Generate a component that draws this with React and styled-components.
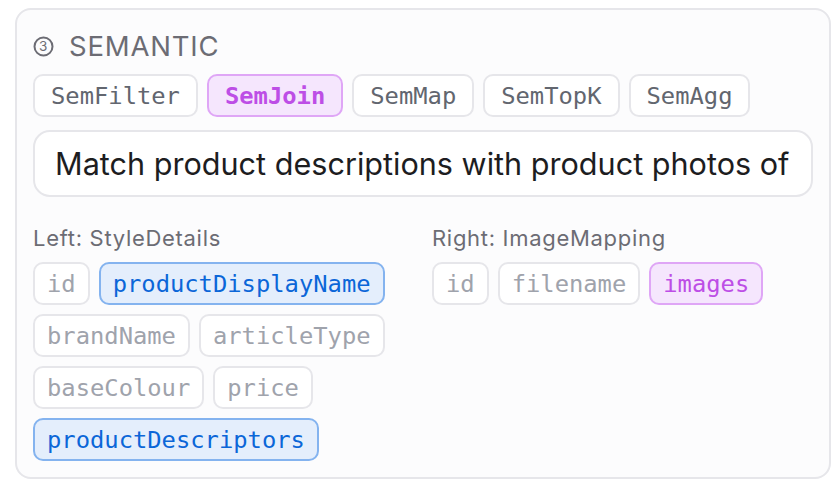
import React from 'react';
import styled, { createGlobalStyle } from 'styled-components';

const GlobalStyle = createGlobalStyle`
  html, body {
    margin: 0;
    padding: 0;
    background: #ffffff;
  }
  body {
    font-family: Inter, "Liberation Sans", sans-serif;
    -webkit-font-smoothing: antialiased;
  }
`;

const Page = styled.div`
  padding: 8px 7px 13px 15px;
  width: 838px;
  box-sizing: border-box;
`;

const Card = styled.section`
  border: 2px solid #e6e6ea;
  border-radius: 16px;
  background: #fcfcfd;
  padding: 20px 16px 16px 16px;
  display: flex;
  flex-direction: column;
`;

const Title = styled.h2`
  margin: 0;
  display: flex;
  align-items: center;
  gap: 15px;
  height: 32px;
  font-size: 27.5px;
  font-weight: 400;
  letter-spacing: 0.8px;
  color: #6c6c74;
  text-transform: uppercase;
`;

const StepBadge = styled.svg`
  width: 21px;
  height: 21px;
  flex: none;
`;

const OpRow = styled.div`
  display: flex;
  gap: 9px;
  margin-top: 12px;
`;

const Chip = styled.span`
  display: inline-flex;
  align-items: center;
  box-sizing: border-box;
  height: 43px;
  padding: 0 ${p => (p.$wide ? 16 : 12)}px;
  border: 2px solid ${p => p.$tone === 'purple' ? '#dfa6f6' : p.$tone === 'blue' ? '#84b3ef' : '#e6e6ea'};
  border-radius: 10px;
  background: ${p => p.$tone === 'purple' ? '#f5e6fd' : p.$tone === 'blue' ? '#e4eefc' : '#ffffff'};
  color: ${p => p.$tone === 'purple' ? '#bd4ee6' : p.$tone === 'blue' ? '#0b66d8' : p.$muted ? '#9fa3ac' : '#62666f'};
  font-family: "DejaVu Sans Mono", "Liberation Mono", monospace;
  font-size: 23.8px;
  font-weight: ${p => (p.$bold ? 700 : 400)};
  white-space: nowrap;
`;

const PromptBox = styled.div`
  margin-top: 13px;
  height: 67px;
  box-sizing: border-box;
  border: 2px solid #e6e6ea;
  border-radius: 17px;
  background: #ffffff;
  display: flex;
  align-items: center;
  padding: 0 20px;
  overflow: hidden;
  font-size: 30.6px;
  color: #1d1d1f;
  white-space: nowrap;
`;

const Tables = styled.div`
  display: grid;
  grid-template-columns: 1fr 1fr;
  column-gap: 18px;
  margin-top: 27px;
`;

const TableCol = styled.div`
  display: flex;
  flex-direction: column;
  gap: 10px;
`;

const TableLabel = styled.div`
  font-size: 22px;
  line-height: 28px;
  letter-spacing: 0.7px;
  color: #6c6c74;
`;

const FieldWrap = styled.div`
  display: flex;
  flex-wrap: wrap;
  gap: 9px 9px;
`;

const ops = [
  { name: 'SemFilter' },
  { name: 'SemJoin', active: true },
  { name: 'SemMap' },
  { name: 'SemTopK' },
  { name: 'SemAgg' },
];

const tables = [
  {
    label: 'Left: StyleDetails',
    fields: [
      { name: 'id' },
      { name: 'productDisplayName', tone: 'blue' },
      { name: 'brandName' },
      { name: 'articleType' },
      { name: 'baseColour' },
      { name: 'price' },
      { name: 'productDescriptors', tone: 'blue' },
    ],
  },
  {
    label: 'Right: ImageMapping',
    fields: [
      { name: 'id' },
      { name: 'filename' },
      { name: 'images', tone: 'purple' },
    ],
  },
];

export default function App() {
  return (
    <>
      <GlobalStyle />
      <Page>
        <Card>
          <Title>
            <StepBadge viewBox="0 0 21 21">
              <circle cx="10.5" cy="10.5" r="9" fill="none" stroke="#6c6c74" strokeWidth="2" />
              <text x="10.5" y="15.3" textAnchor="middle" fontSize="13.5" fontFamily="Inter, sans-serif" fill="#6c6c74">3</text>
            </StepBadge>
            Semantic
          </Title>
          <OpRow>
            {ops.map(op => (
              <Chip
                key={op.name}
                $wide
                $bold={op.active}
                $tone={op.active ? 'purple' : undefined}
              >
                {op.name}
              </Chip>
            ))}
          </OpRow>
          <PromptBox>Match product descriptions with product photos of</PromptBox>
          <Tables>
            {tables.map(t => (
              <TableCol key={t.label}>
                <TableLabel>{t.label}</TableLabel>
                <FieldWrap>
                  {t.fields.map(f => (
                    <Chip key={f.name} $tone={f.tone} $muted>
                      {f.name}
                    </Chip>
                  ))}
                </FieldWrap>
              </TableCol>
            ))}
          </Tables>
        </Card>
      </Page>
    </>
  );
}
